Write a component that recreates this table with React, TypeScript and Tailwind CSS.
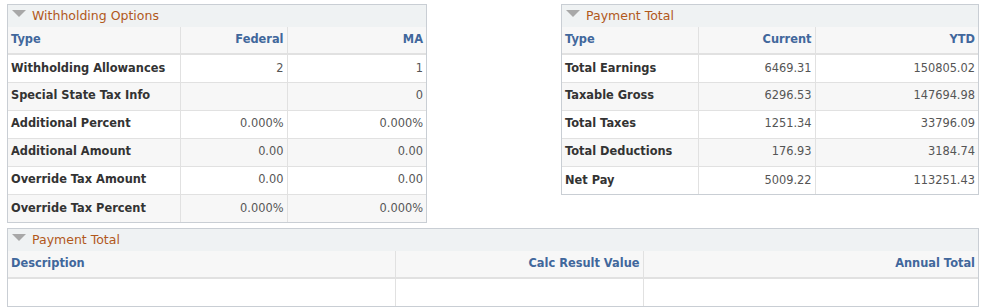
import React from 'react'

type Col = { label: string; width: string; align: 'left' | 'right' }

const font = { fontFamily: '"DejaVu Sans", Verdana, sans-serif' }

const withholdingCols: Col[] = [
  { label: 'Type', width: 'w-[172px]', align: 'left' },
  { label: 'Federal', width: 'w-[107px]', align: 'right' },
  { label: 'MA', width: '', align: 'right' },
]

const withholdingRows = [
  ['Withholding Allowances', '2', '1'],
  ['Special State Tax Info', '', '0'],
  ['Additional Percent', '0.000%', '0.000%'],
  ['Additional Amount', '0.00', '0.00'],
  ['Override Tax Amount', '0.00', '0.00'],
  ['Override Tax Percent', '0.000%', '0.000%'],
]

const paymentCols: Col[] = [
  { label: 'Type', width: 'w-[136px]', align: 'left' },
  { label: 'Current', width: 'w-[117px]', align: 'right' },
  { label: 'YTD', width: '', align: 'right' },
]

const paymentRows = [
  ['Total Earnings', '6469.31', '150805.02'],
  ['Taxable Gross', '6296.53', '147694.98'],
  ['Total Taxes', '1251.34', '33796.09'],
  ['Total Deductions', '176.93', '3184.74'],
  ['Net Pay', '5009.22', '113251.43'],
]

const calcCols: Col[] = [
  { label: 'Description', width: 'w-[387px]', align: 'left' },
  { label: 'Calc Result Value', width: 'w-[248px]', align: 'right' },
  { label: 'Annual Total', width: '', align: 'right' },
]

function Triangle() {
  return (
    <svg width="14" height="8" viewBox="0 0 14 8" className="mr-[6px] mt-[-4px]">
      <polygon points="0,0 14,0 7,7" fill="#a8a8a8" />
    </svg>
  )
}

function Panel({ title, cols, rows, className }: { title: string; cols: Col[]; rows: string[][]; className: string }) {
  return (
    <div className={`border border-[#c9ced4] bg-white ${className}`}>
      <div className="h-[22px] bg-[#eff2f3] flex items-center pl-[4px] text-[12.5px] text-[#b1581b]">
        <Triangle />
        <span>{title}</span>
      </div>
      <table className="w-full border-collapse table-fixed text-[11.4px]">
        <thead>
          <tr className="bg-[#f7f7f7]">
            {cols.map((c, i) => (
              <th
                key={c.label}
                className={`h-[27px] px-[3px] font-bold text-[#41679c] border-b-2 border-[#e1e1e1] ${c.width} ${
                  c.align === 'right' ? 'text-right' : 'text-left'
                } ${i > 0 ? 'border-l border-l-[#e1e1e1]' : ''}`}
              >
                {c.label}
              </th>
            ))}
          </tr>
        </thead>
        <tbody>
          {rows.map((r, ri) => (
            <tr key={ri} className={ri % 2 === 0 ? 'bg-white' : 'bg-[#f7f7f7]'}>
              {r.map((v, i) => (
                <td
                  key={i}
                  className={`h-[28px] px-[3px] ${ri < rows.length - 1 ? 'border-b border-[#e1e1e1]' : ''} ${
                    i === 0 ? 'font-bold text-[#333333] text-left' : 'text-[#555555] text-right border-l border-l-[#e1e1e1]'
                  }`}
                >
                  {v}
                </td>
              ))}
            </tr>
          ))}
        </tbody>
      </table>
    </div>
  )
}

export default function App() {
  return (
    <div className="w-[985px] h-[308px] bg-white pt-[4px] pl-[7px]" style={font}>
      <div className="flex items-start">
        <Panel title="Withholding Options" cols={withholdingCols} rows={withholdingRows} className="w-[420px]" />
        <Panel title="Payment Total" cols={paymentCols} rows={paymentRows} className="w-[418px] ml-[134px]" />
      </div>
      <Panel title="Payment Total" cols={calcCols} rows={[['', '', '']]} className="w-[972px] mt-[5px]" />
    </div>
  )
}
